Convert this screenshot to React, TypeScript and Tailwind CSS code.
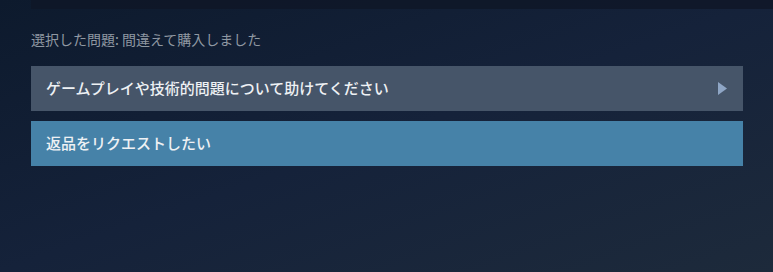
export default function App() {
  const font = { fontFamily: '"Noto Sans CJK JP", "Noto Sans", Arial, sans-serif' };
  return (
    <div
      className="w-[773px] h-[272px] overflow-hidden bg-gradient-to-br from-[#0d1a2d] via-[#15223a] to-[#1d2a3b]"
      style={font}
    >
      <div className="ml-[31px] h-[9px] bg-[#0f1727]/80" />
      <div className="px-[31px] pt-[21px]">
        <div className="text-[14px] leading-[19px] text-[#8f98a2]">選択した問題: 間違えて購入しました</div>
        <div className="mt-[17px] flex flex-col gap-[10px] w-[712px]">
          <div className="h-[45px] bg-[#465569] flex items-center justify-between pl-[15px] pr-[16px] text-[15px] font-medium text-[#eef1f4]">
            <span>ゲームプレイや技術的問題について助けてください</span>
            <svg width="9" height="13" viewBox="0 0 9 13">
              <path d="M0 0 L9 6.5 L0 13 Z" fill="#8fa6c5" />
            </svg>
          </div>
          <div className="h-[45px] bg-[#4682a8] flex items-center pl-[15px] text-[15px] font-medium text-[#eef1f4]">
            <span>返品をリクエストしたい</span>
          </div>
        </div>
      </div>
    </div>
  );
}
